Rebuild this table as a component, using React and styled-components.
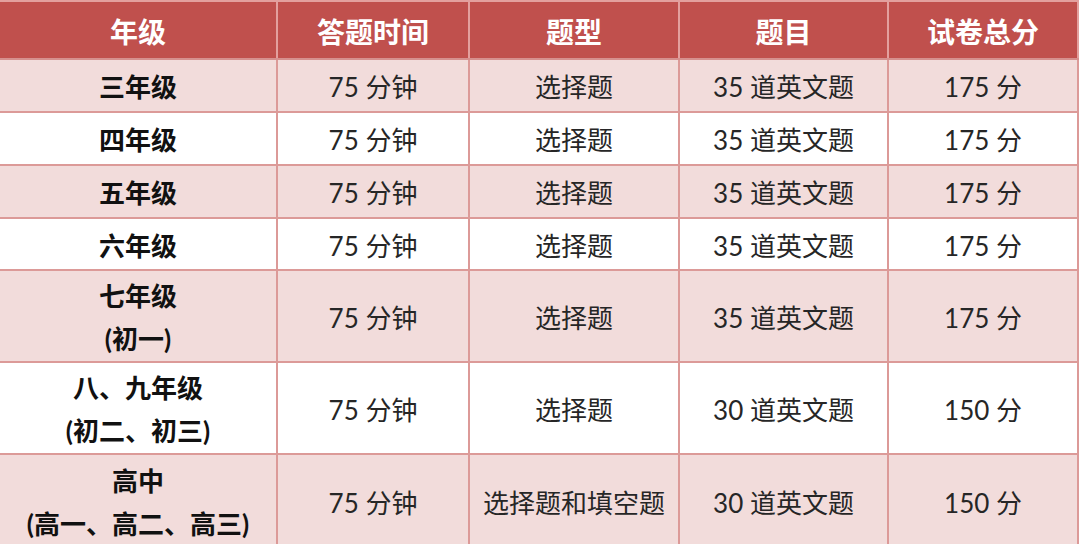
import React from "react";
import styled, { createGlobalStyle } from "styled-components";

const Global = createGlobalStyle`
  html, body { margin: 0; padding: 0; background: #ffffff; }
  body { font-family: "Lato", "Noto Sans CJK SC", sans-serif; }
`;

const Table = styled.table`
  width: 1078px;
  table-layout: fixed;
  border-collapse: collapse;
  font-family: "Lato", "Noto Sans CJK SC", sans-serif;
`;

const HeadCell = styled.th`
  height: 55px;
  padding: 1px 0 0;
  background: #c0504d;
  color: #ffffff;
  font-size: 28px;
  font-weight: 700;
  text-align: center;
  vertical-align: middle;
  border: 2px solid #e3a09e;
  border-bottom-color: #d6908e;
  border-left: none;
`;

const Row = styled.tr`
  background: ${(p) => (p.$band ? "#f2dcdb" : "#ffffff")};
`;

const Cell = styled.td`
  height: ${(p) => p.$h}px;
  padding: 4px 0 0;
  text-align: center;
  vertical-align: middle;
  font-size: 26px;
  line-height: 43px;
  color: ${(p) => (p.$bold ? "#111111" : "#262626")};
  font-weight: ${(p) => (p.$bold ? 700 : 400)};
  border: 2px solid #dc9a98;
  border-left: ${(p) => (p.$first ? "none" : "2px solid #d49391")};
  border-bottom: ${(p) => (p.$last ? "none" : "2px solid #dc9a98")};
  white-space: nowrap;
`;

const Line = styled.div``;

const headers = ["年级", "答题时间", "题型", "题目", "试卷总分"];
const widths = [277, 192, 210, 209, 190];

const rows = [
  { grade: ["三年级"], type: "选择题", q: "35 道英文题", score: "175 分", h: 47 },
  { grade: ["四年级"], type: "选择题", q: "35 道英文题", score: "175 分", h: 47 },
  { grade: ["五年级"], type: "选择题", q: "35 道英文题", score: "175 分", h: 47 },
  { grade: ["六年级"], type: "选择题", q: "35 道英文题", score: "175 分", h: 46 },
  { grade: ["七年级", "(初一)"], type: "选择题", q: "35 道英文题", score: "175 分", h: 86 },
  { grade: ["八、九年级", "(初二、初三)"], type: "选择题", q: "30 道英文题", score: "150 分", h: 84 },
  { grade: ["高中", "(高一、高二、高三)"], type: "选择题和填空题", q: "30 道英文题", score: "150 分", h: 88 },
];

export default function App() {
  return (
    <>
      <Global />
      <Table>
        <colgroup>
          {widths.map((w, i) => (
            <col key={i} style={{ width: w }} />
          ))}
        </colgroup>
        <thead>
          <tr>
            {headers.map((h) => (
              <HeadCell key={h}>{h}</HeadCell>
            ))}
          </tr>
        </thead>
        <tbody>
          {rows.map((r, i) => {
            const last = i === rows.length - 1;
            return (
              <Row key={i} $band={i % 2 === 0}>
                <Cell $h={r.h} $bold $first $last={last}>
                  {r.grade.map((g) => (
                    <Line key={g}>{g}</Line>
                  ))}
                </Cell>
                <Cell $h={r.h} $last={last}>75 分钟</Cell>
                <Cell $h={r.h} $last={last}>{r.type}</Cell>
                <Cell $h={r.h} $last={last}>{r.q}</Cell>
                <Cell $h={r.h} $last={last}>{r.score}</Cell>
              </Row>
            );
          })}
        </tbody>
      </Table>
    </>
  );
}
